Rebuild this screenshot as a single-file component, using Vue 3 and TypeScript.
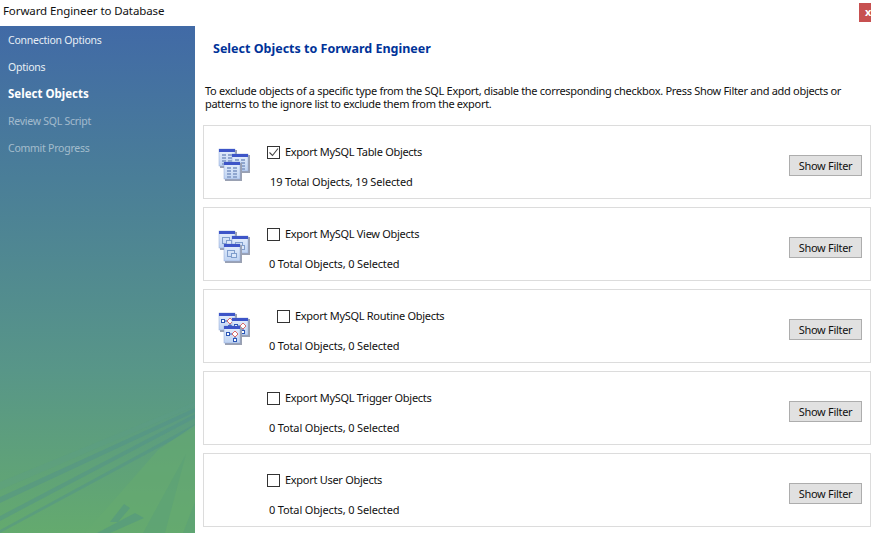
<script setup lang="ts">
type IconKind = 'table' | 'view' | 'routine' | null

interface ExportRow {
    label: string
    status: string
    checked: boolean
    icon: IconKind
    rowClass?: string
}

const steps = [
    { label: 'Connection Options', state: 'done' },
    { label: 'Options', state: 'done' },
    { label: 'Select Objects', state: 'current' },
    { label: 'Review SQL Script', state: 'todo' },
    { label: 'Commit Progress', state: 'todo' },
]

const rows: ExportRow[] = [
    { label: 'Export MySQL Table Objects', status: '19 Total Objects, 19 Selected', checked: true, icon: 'table', rowClass: 'first' },
    { label: 'Export MySQL View Objects', status: '0 Total Objects, 0 Selected', checked: false, icon: 'view' },
    { label: 'Export MySQL Routine Objects', status: '0 Total Objects, 0 Selected', checked: false, icon: 'routine', rowClass: 'routine' },
    { label: 'Export MySQL Trigger Objects', status: '0 Total Objects, 0 Selected', checked: false, icon: null },
    { label: 'Export User Objects', status: '0 Total Objects, 0 Selected', checked: false, icon: null },
]

// 3 overlapping little windows in every icon
const windows = [
    { x: 2, y: 2 },
    { x: 15, y: 7 },
    { x: 7, y: 15 },
]
const tableCells = [0, 1, 2, 3]
</script>

<template>
    <div class="dialog">
        <header class="titlebar">
            <span class="title">Forward Engineer to Database</span>
            <span class="close">x</span>
        </header>
        <div class="body">
            <aside class="sidebar">
                <svg class="backdrop" width="195" height="507" viewBox="0 26 195 507">
                    <polygon points="0,482 195,402 195,406 0,490" fill="#5a9a8c" opacity="0.25" />
                    <polygon points="0,497 195,408 195,412 0,503" fill="#4f8f8e" opacity="0.4" />
                    <polygon points="0,516 195,414 195,418 0,521" fill="#4f8f8e" opacity="0.4" />
                    <polygon points="0,530 195,424 195,428 0,533" fill="#4f8f8e" opacity="0.4" />
                    <polygon points="85,533 158,450 195,425 195,533" fill="#65aa70" opacity="0.6" />
                    <polygon points="143,533 186,454 165,533" fill="#5a9f78" opacity="0.5" />
                    <polygon points="183,533 195,502 195,533" fill="#5a9f78" opacity="0.5" />
                    <polygon points="110,522 124,504 130,508 118,522" fill="#4f9384" opacity="0.5" />
                    <polygon points="97,533 135,513 144,518 110,533" fill="#4f9384" opacity="0.5" />
                </svg>
                <div
                    v-for="step in steps"
                    :key="step.label"
                    class="step"
                    :class="step.state"
                >
                    {{ step.label }}
                </div>
            </aside>

            <main class="content">
                <h1 class="heading">Select Objects to Forward Engineer</h1>
                <p class="description">
                    To exclude objects of a specific type from the SQL Export, disable the corresponding checkbox. Press Show Filter and add objects or
                    patterns to the ignore list to exclude them from the export.
                </p>

                <section v-for="row in rows" :key="row.label" class="card" :class="row.rowClass">
                    <div class="icon">
                        <svg v-if="row.icon" width="36" height="36" viewBox="0 0 36 36">
                            <defs>
                                <linearGradient id="pane" x1="0" y1="0" x2="0" y2="1">
                                    <stop offset="0" stop-color="#e6effc" />
                                    <stop offset="1" stop-color="#bfd3f2" />
                                </linearGradient>
                            </defs>
                            <g v-for="(w, i) in windows" :key="i" :transform="`translate(${w.x} ${w.y})`">
                                <rect x="1" y="1" width="17" height="18" fill="#9aa1b2" />
                                <rect x="0" y="0" width="16" height="17" fill="url(#pane)" stroke="#8fa8d8" stroke-width="0.5" />
                                <rect x="0" y="0" width="16" height="3" fill="#3d55c8" />
                                <template v-if="row.icon === 'table'">
                                    <g v-for="c in tableCells" :key="c">
                                        <rect x="3" :y="5 + c * 3" width="4" height="2" fill="#8fa6cf" />
                                        <rect x="9" :y="5 + c * 3" width="4" height="2" fill="#8fa6cf" />
                                    </g>
                                </template>
                                <template v-else-if="row.icon === 'view'">
                                    <rect x="3.5" y="6.5" width="7" height="6" fill="none" stroke="#7f9dcc" />
                                    <rect x="7.5" y="9.5" width="5" height="4" fill="#dce8fa" stroke="#7f9dcc" />
                                </template>
                                <template v-else>
                                    <rect x="2.5" y="6.5" width="3" height="3" fill="#fff" stroke="#2b55b5" />
                                    <path d="M11 5 L14 8 L11 11 L8 8 Z" fill="#fff" stroke="#d86a6a" />
                                    <path d="M6 8 H8 M11 11 V13" stroke="#2b55b5" fill="none" />
                                    <rect x="9.5" y="12.5" width="3" height="3" fill="#fff" stroke="#2b55b5" />
                                </template>
                            </g>
                        </svg>
                    </div>
                    <div class="details">
                        <label class="option">
                            <span class="checkbox">
                                <svg v-if="row.checked" width="11" height="11" viewBox="0 0 11 11">
                                    <path d="M1.5 5.5 L4.5 8.5 L10 1.5" fill="none" stroke="#444" stroke-width="1.1" />
                                </svg>
                            </span>
                            <span class="option-text">{{ row.label }}</span>
                        </label>
                        <div class="status">{{ row.status }}</div>
                    </div>
                    <button class="filter" type="button">Show Filter</button>
                </section>
            </main>
        </div>
    </div>
</template>

<style scoped>
.dialog {
    width: 871px;
    height: 533px;
    overflow: hidden;
    background: #fff;
    color: #111;
    font-family: "Noto Sans", sans-serif;
    font-size: 11px;
}

.titlebar {
    height: 26px;
    display: flex;
    justify-content: space-between;
    align-items: flex-start;
}

.title {
    margin: 3px 0 0 3px;
    font-size: 11.5px;
    letter-spacing: -0.1px;
    line-height: 15px;
}

.close {
    margin-top: 3px;
    width: 12px;
    height: 19px;
    background: #c75050;
    color: #fff;
    font-size: 11px;
    font-weight: 700;
    line-height: 17px;
    padding-left: 6px;
    box-sizing: border-box;
    overflow: hidden;
}

.body {
    display: flex;
    height: 507px;
}

.sidebar {
    position: relative;
    width: 195px;
    flex: none;
    padding-top: 1px;
    box-sizing: border-box;
    background: linear-gradient(#416aa6 0%, #4a7e98 30%, #589688 68%, #64aa6e 100%);
}

.backdrop {
    position: absolute;
    left: 0;
    top: 0;
}

.step {
    position: relative;
    height: 27px;
    padding-left: 8px;
    font-size: 10.5px;
    letter-spacing: -0.25px;
    line-height: 26px;
    color: #e8eff5;
}

.step.current {
    color: #fff;
    font-size: 11.5px;
    letter-spacing: 0;
    font-weight: 700;
}

.step.todo {
    color: rgba(255, 255, 255, 0.5);
}

.content {
    flex: 1;
    min-width: 0;
    padding-left: 8px;
}

.heading {
    margin: 15px 0 0 10px;
    font-size: 12.5px;
    line-height: 16px;
    font-weight: 700;
    color: #003399;
}

.description {
    width: 660px;
    margin: 27px 0 15px 2px;
    letter-spacing: -0.3px;
    line-height: 13px;
}

.card {
    display: flex;
    align-items: flex-start;
    width: 668px;
    height: 74px;
    margin-bottom: 8px;
    border: 1px solid #dcdcdc;
    box-sizing: border-box;
}

.icon {
    width: 36px;
    height: 36px;
    margin: 21px 14px 0 13px;
    flex: none;
}

.details {
    flex: 1;
    padding-top: 20px;
}

.option {
    display: flex;
    align-items: center;
    gap: 5px;
    height: 13px;
    letter-spacing: -0.29px;
    line-height: 13px;
}

.option-text {
    margin-bottom: 2px;
}

.routine .option {
    padding-left: 10px;
}

.checkbox {
    width: 13px;
    height: 13px;
    flex: none;
    display: block;
    border: 1px solid #333;
    box-sizing: border-box;
    background: #fff;
}

.checkbox svg {
    display: block;
}

.status {
    margin-top: 16px;
    padding-left: 2px;
    letter-spacing: -0.15px;
    line-height: 13px;
}

.first .status {
    padding-left: 3px;
}

.filter {
    width: 73px;
    height: 21px;
    margin: 29px 8px 0 0;
    padding: 0;
    flex: none;
    background: #e1e1e1;
    border: 1px solid #adadad;
    color: #111;
    font: inherit;
    letter-spacing: -0.3px;
}
</style>
